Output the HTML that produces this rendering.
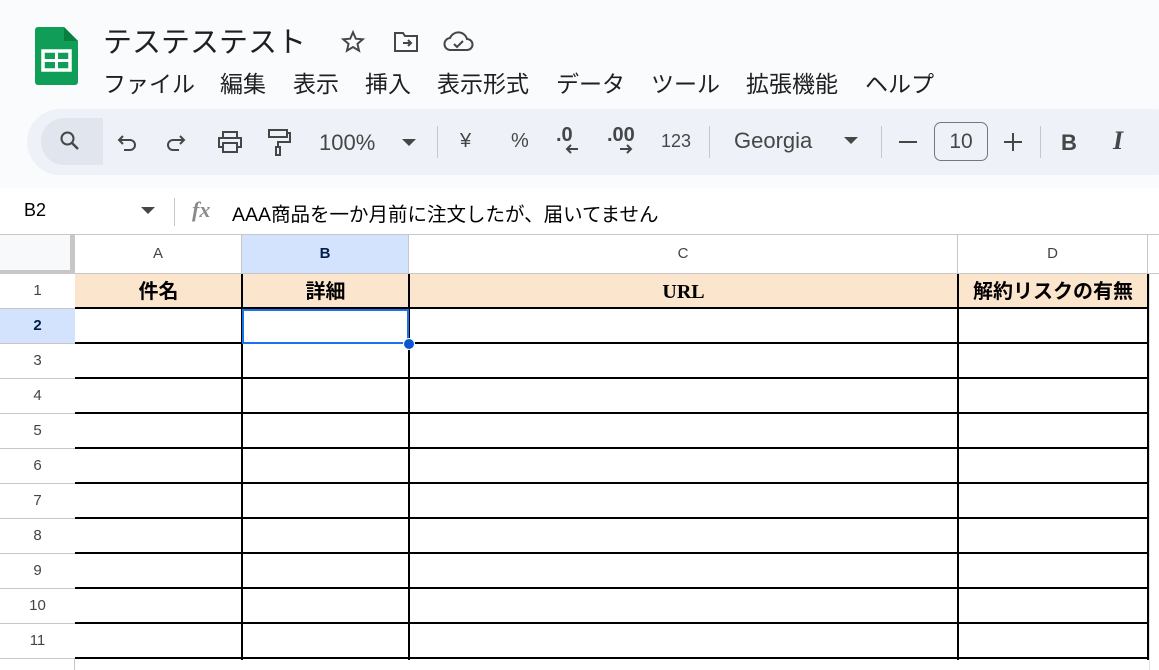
<!DOCTYPE html><html><head><meta charset="utf-8"><style>
*{margin:0;padding:0;box-sizing:border-box}
body{width:1159px;height:670px;overflow:hidden;background:#f9fbfd;font-family:"Liberation Sans","Noto Sans CJK JP",sans-serif;position:relative;color:#1f1f1f}
.a{position:absolute}
.t{font-size:23px;white-space:nowrap}
.ic{position:absolute;fill:none;stroke:#444746;stroke-width:2}
.tb{color:#444746;font-size:20px}
.hl{background:#000;height:2px;left:75px;width:1074px}
.vl{background:#000;width:2px;top:274px;height:386px}
.rh{left:0;width:75px;text-align:center;font-size:15px;color:#444;height:35px;line-height:34px;border-bottom:1px solid #c7c7c7;background:#fff}
.ch{top:235px;height:39px;line-height:38px;text-align:center;font-size:15px;color:#444;background:#fff;border-right:1px solid #c7c7c7;border-bottom:1px solid #c7c7c7}
.h1{top:274px;height:34px;line-height:36px;text-align:center;font-weight:bold;font-size:20px;color:#000}
</style></head><body>
<svg class="a" style="left:35px;top:27px" width="43" height="58" viewBox="0 0 43 58"><path d="M3 0H29L43 14V55a3 3 0 0 1-3 3H3a3 3 0 0 1-3-3V3a3 3 0 0 1 3-3z" fill="#0f9d58"/><path d="M29 0V14H43z" fill="#087f3f"/><rect x="8" y="24" width="27" height="19" fill="none" stroke="#fff" stroke-width="3.5"/><path d="M8 33.5H35M21.5 24V43" stroke="#fff" stroke-width="3"/></svg>
<div class="a" style="left:103px;top:19px;font-size:29px;color:#1f1f1f">テステステスト</div>
<svg class="ic" style="left:340px;top:29px" width="26" height="26" viewBox="0 0 24 24"><path d="M12 3l2.6 6 6.4.5-4.9 4.2 1.5 6.3L12 16.6 6.4 20l1.5-6.3L3 9.5l6.4-.5z" stroke-width="1.8"/></svg>
<svg class="ic" style="left:392px;top:30px" width="28" height="24" viewBox="0 0 28 24"><path d="M3 3h8l2 3h12v15H3z" stroke-width="2"/><path d="M11 13h8M16 10l3 3-3 3" stroke-width="2"/></svg>
<svg class="ic" style="left:443px;top:30px" width="32" height="24" viewBox="0 0 32 24"><path d="M8 20a6 6 0 0 1-1-12 9 9 0 0 1 17 1 5.5 5.5 0 0 1 0 11z" stroke-width="2"/><path d="M11 14l3 3 6-6" stroke-width="2"/></svg>
<div class="a t" style="left:103px;top:65px">ファイル</div>
<div class="a t" style="left:220px;top:65px">編集</div>
<div class="a t" style="left:293px;top:65px">表示</div>
<div class="a t" style="left:365px;top:65px">挿入</div>
<div class="a t" style="left:437px;top:65px">表示形式</div>
<div class="a t" style="left:556px;top:65px">データ</div>
<div class="a t" style="left:651px;top:65px">ツール</div>
<div class="a t" style="left:746px;top:65px">拡張機能</div>
<div class="a t" style="left:865px;top:65px">ヘルプ</div>
<div class="a" style="left:27px;top:109px;width:1160px;height:66px;background:#eef2f8;border-radius:33px"></div>
<div class="a" style="left:41px;top:118px;width:62px;height:47px;background:#e1e6ee;border-radius:23px 0 0 23px"></div>
<svg class="ic" style="left:58px;top:129px" width="24" height="24" viewBox="0 0 24 24"><circle cx="9.5" cy="9.5" r="6"/><path d="M14 14l6 6" stroke-width="2.4"/></svg>
<svg class="ic" style="left:115px;top:131px" width="24" height="24" viewBox="0 0 24 24"><path d="M5 9h10a5 5 0 0 1 0 10h-6M8 5L4 9l4 4"/></svg>
<svg class="ic" style="left:164px;top:131px" width="24" height="24" viewBox="0 0 24 24"><path d="M19 9H9a5 5 0 0 0 0 10h6M16 5l4 4-4 4"/></svg>
<svg class="ic" style="left:216px;top:129px" width="28" height="26" viewBox="0 0 28 26"><path d="M7 8V3h14v5M7 18H3V9h22v9h-4M7 14h14v9H7z"/></svg>
<svg class="ic" style="left:266px;top:127px" width="26" height="30" viewBox="0 0 26 30"><path d="M3 3h18v7H3zM21 6h3v9H12v5M10 20h4v8h-4z"/></svg>
<div class="a tb" style="left:319px;top:130px;font-size:22px">100%</div>
<svg class="a" style="left:402px;top:139px" width="14" height="8"><path d="M0 0h14L7 7z" fill="#444746"/></svg>
<div class="a" style="left:437px;top:126px;width:1px;height:32px;background:#c7c7c7"></div>
<div class="a tb" style="left:460px;top:130px">¥</div>
<div class="a tb" style="left:511px;top:130px">%</div>
<div class="a tb" style="left:556px;top:124px;font-weight:bold">.0</div>
<svg class="ic" style="left:564px;top:143px" width="16" height="12" viewBox="0 0 16 12"><path d="M14 6H3M7 2L3 6l4 4"/></svg>
<div class="a tb" style="left:607px;top:124px;font-weight:bold">.00</div>
<svg class="ic" style="left:618px;top:143px" width="16" height="12" viewBox="0 0 16 12"><path d="M2 6h11M9 2l4 4-4 4"/></svg>
<div class="a tb" style="left:661px;top:131px;font-size:18px">123</div>
<div class="a" style="left:709px;top:126px;width:1px;height:32px;background:#c7c7c7"></div>
<div class="a tb" style="left:734px;top:128px;font-size:22px">Georgia</div>
<svg class="a" style="left:844px;top:137px" width="14" height="8"><path d="M0 0h14L7 7z" fill="#444746"/></svg>
<div class="a" style="left:881px;top:126px;width:1px;height:32px;background:#c7c7c7"></div>
<div class="a" style="left:899px;top:141px;width:18px;height:2px;background:#444746"></div>
<div class="a" style="left:934px;top:122px;width:54px;height:39px;border:1px solid #747775;border-radius:7px;text-align:center;line-height:37px;font-size:21px;color:#444746">10</div>
<div class="a" style="left:1004px;top:141px;width:18px;height:2px;background:#444746"></div>
<div class="a" style="left:1012px;top:133px;width:2px;height:18px;background:#444746"></div>
<div class="a" style="left:1040px;top:126px;width:1px;height:32px;background:#c7c7c7"></div>
<div class="a tb" style="left:1061px;top:130px;font-weight:bold;font-size:22px">B</div>
<div class="a" style="left:1113px;top:126px;font-family:'Liberation Serif',serif;font-style:italic;font-weight:bold;font-size:26px;color:#444746">I</div>
<div class="a" style="left:0;top:188px;width:1159px;height:47px;background:#fff;border-bottom:1px solid #c7c7c7"></div>
<div class="a" style="left:24px;top:200px;font-size:18px;color:#000">B2</div>
<svg class="a" style="left:141px;top:207px" width="14" height="8"><path d="M0 0h14L7 7z" fill="#444746"/></svg>
<div class="a" style="left:174px;top:198px;width:1px;height:28px;background:#c7c7c7"></div>
<div class="a" style="left:192px;top:197px;font-family:'Liberation Serif',serif;font-style:italic;font-weight:bold;font-size:22px;color:#8a8a8a">fx</div>
<div class="a" style="left:232px;top:198px;font-size:19.5px;color:#000;white-space:nowrap">AAA商品を一か月前に注文したが、届いてません</div>
<div class="a" style="left:0;top:235px;width:1159px;height:435px;background:#fff"></div>
<div class="a" style="left:0;top:235px;width:70px;height:35px;background:#f8f9fa"></div>
<div class="a" style="left:70px;top:235px;width:5px;height:39px;background:#c7c7c7"></div>
<div class="a" style="left:0;top:270px;width:75px;height:4px;background:#c7c7c7"></div>
<div class="a ch" style="left:75px;width:167px">A</div>
<div class="a ch" style="left:242px;width:167px;background:#d3e3fd;font-weight:bold;color:#041e49">B</div>
<div class="a ch" style="left:409px;width:549px">C</div>
<div class="a ch" style="left:958px;width:190px">D</div>
<div class="a ch" style="left:1148px;width:20px"></div>
<div class="a" style="left:74px;top:274px;width:1px;height:396px;background:#c7c7c7"></div>
<div class="a rh" style="top:274px">1</div>
<div class="a rh" style="top:309px;background:#d3e3fd;font-weight:bold;color:#041e49">2</div>
<div class="a rh" style="top:344px">3</div>
<div class="a rh" style="top:379px">4</div>
<div class="a rh" style="top:414px">5</div>
<div class="a rh" style="top:449px">6</div>
<div class="a rh" style="top:484px">7</div>
<div class="a rh" style="top:519px">8</div>
<div class="a rh" style="top:554px">9</div>
<div class="a rh" style="top:589px">10</div>
<div class="a rh" style="top:624px">11</div>
<div class="a" style="left:1149px;top:274px;width:10px;height:396px;background:#fff;border-left:1px solid #e0e0e0"></div>
<div class="a" style="left:75px;top:274px;width:1073px;height:34px;background:#fce5cd"></div>
<div class="a h1" style="left:75px;width:167px">件名</div>
<div class="a h1" style="left:242px;width:167px">詳細</div>
<div class="a h1" style="left:409px;width:549px;font-family:'Liberation Serif',serif">URL</div>
<div class="a h1" style="left:958px;width:190px">解約リスクの有無</div>
<div class="a hl" style="top:307px"></div><div class="a hl" style="top:342px"></div><div class="a hl" style="top:377px"></div><div class="a hl" style="top:412px"></div><div class="a hl" style="top:447px"></div><div class="a hl" style="top:482px"></div><div class="a hl" style="top:517px"></div><div class="a hl" style="top:552px"></div><div class="a hl" style="top:587px"></div><div class="a hl" style="top:622px"></div><div class="a hl" style="top:657px"></div>
<div class="a vl" style="left:241px"></div><div class="a vl" style="left:408px"></div><div class="a vl" style="left:957px"></div><div class="a vl" style="left:1147px"></div>
<div class="a" style="left:242px;top:309px;width:167px;height:35px;border:2px solid #1a73e8"></div>
<div class="a" style="left:403px;top:338px;width:12px;height:12px;border-radius:50%;background:#0b57d0;border:1px solid #fff"></div>
</body></html>
